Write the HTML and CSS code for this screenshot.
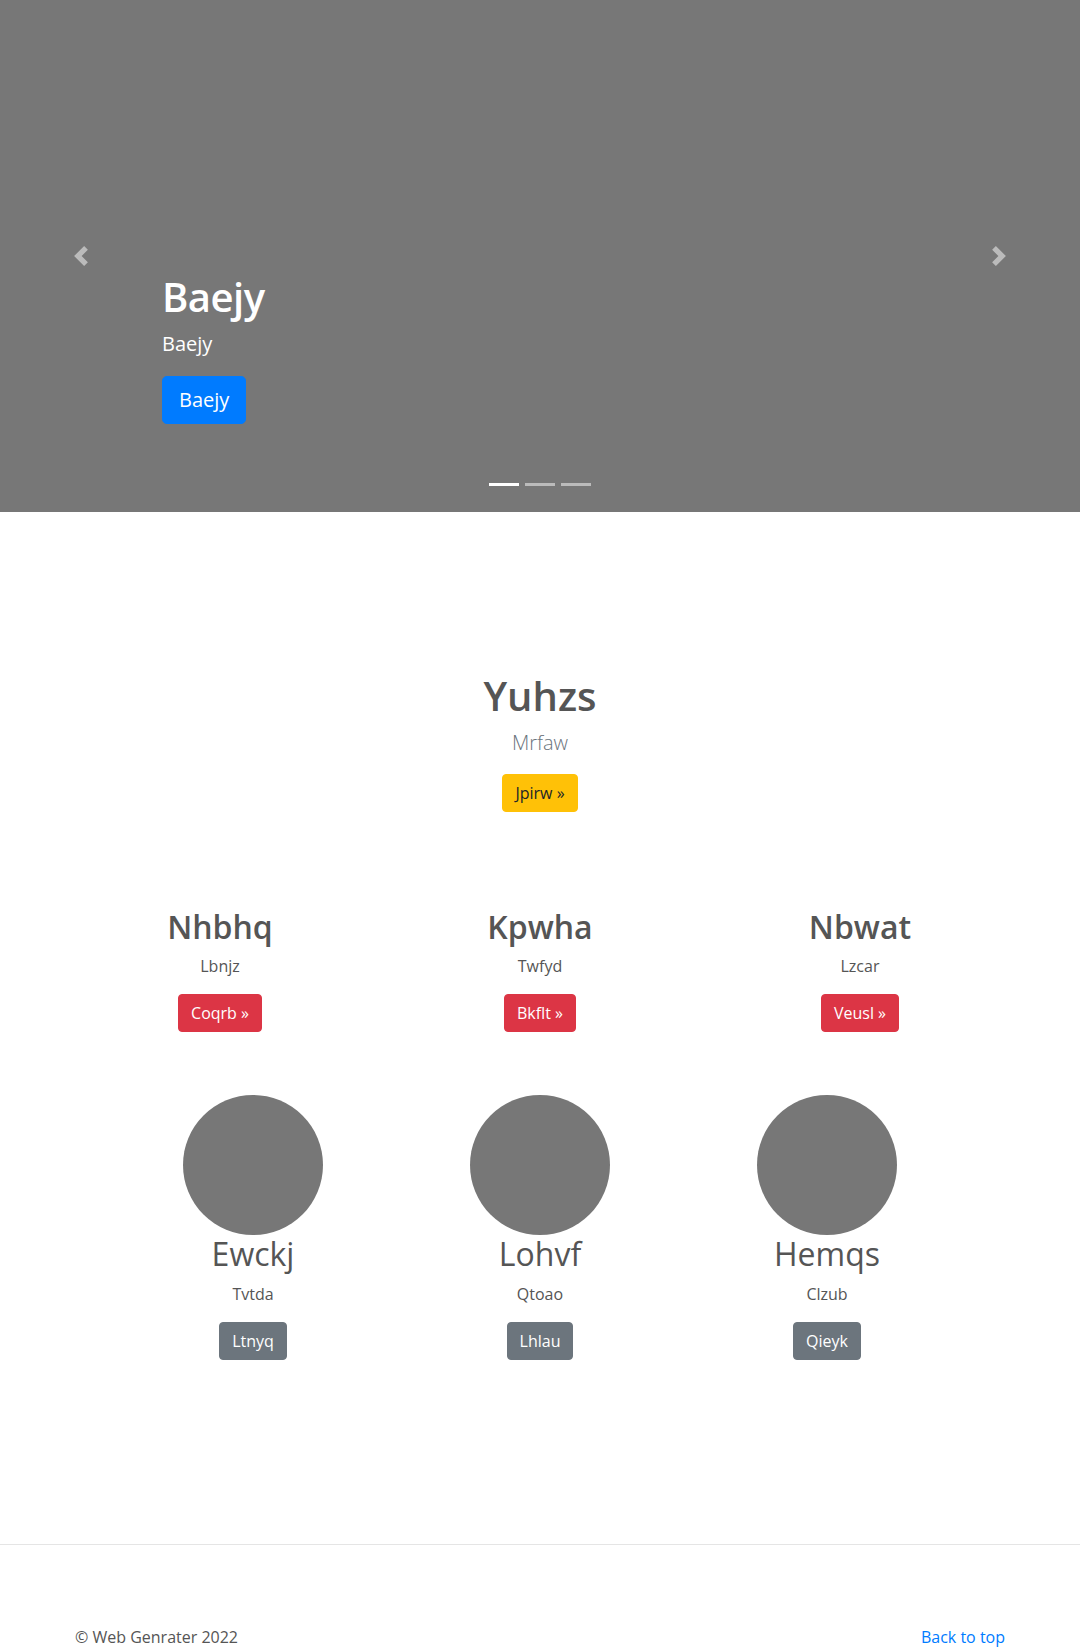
FILE: index.html
```html
<!DOCTYPE html>
<html lang="en">
<head>
<meta charset="utf-8">
<title>Carousel</title>
<link rel="stylesheet" href="styles.css">
</head>
<body>
<div class="carousel">
  <ol class="indicators">
    <li class="active"></li>
    <li></li>
    <li></li>
  </ol>
  <div class="slide">
    <div class="caption">
      <h1>Baejy</h1>
      <p>Baejy</p>
      <p><a class="btn btn-lg btn-primary" href="#">Baejy</a></p>
    </div>
  </div>
  <a class="control prev" href="#">
    <svg width="20" height="20" viewBox="0 0 8 8" fill="#fff"><path d="M5.25 0l-4 4 4 4 1.5-1.5L4.25 4l2.5-2.5L5.25 0z"/></svg>
  </a>
  <a class="control next" href="#">
    <svg width="20" height="20" viewBox="0 0 8 8" fill="#fff"><path d="M2.75 0l-1.5 1.5L3.75 4l-2.5 2.5L2.75 8l4-4-4-4z"/></svg>
  </a>
</div>

<main class="marketing">
  <section class="hero">
    <h1>Yuhzs</h1>
    <p class="lead">Mrfaw</p>
    <p><a class="btn btn-warning" href="#">Jpirw &raquo;</a></p>
  </section>

  <div class="row three">
    <div class="col">
      <h2 class="strong">Nhbhq</h2>
      <p>Lbnjz</p>
      <p><a class="btn btn-danger" href="#">Coqrb &raquo;</a></p>
    </div>
    <div class="col">
      <h2 class="strong">Kpwha</h2>
      <p>Twfyd</p>
      <p><a class="btn btn-danger" href="#">Bkflt &raquo;</a></p>
    </div>
    <div class="col">
      <h2 class="strong">Nbwat</h2>
      <p>Lzcar</p>
      <p><a class="btn btn-danger" href="#">Veusl &raquo;</a></p>
    </div>
  </div>

  <div class="row circles">
    <div class="col">
      <div class="circle"></div>
      <h2>Ewckj</h2>
      <p>Tvtda</p>
      <p><a class="btn btn-secondary" href="#">Ltnyq</a></p>
    </div>
    <div class="col">
      <div class="circle"></div>
      <h2>Lohvf</h2>
      <p>Qtoao</p>
      <p><a class="btn btn-secondary" href="#">Lhlau</a></p>
    </div>
    <div class="col">
      <div class="circle"></div>
      <h2>Hemqs</h2>
      <p>Clzub</p>
      <p><a class="btn btn-secondary" href="#">Qieyk</a></p>
    </div>
  </div>

  <hr class="divider">
</main>

<footer class="footer">
  <p class="to-top"><a href="#">Back to top</a></p>
  <p>&copy; Web Genrater 2022</p>
</footer>
</body>
</html>
```

FILE: styles.css
```css
* { box-sizing: border-box; }

body {
  margin: 0;
  font-family: "Open Sans", "Noto Sans", sans-serif;
  font-size: 16px;
  line-height: 1.5;
  color: #555;
  background: #fff;
}

h1, h2, p { margin-top: 0; }
h1, h2 { margin-bottom: 8px; line-height: 1.2; }
h1 { font-size: 40px; font-weight: 600; }
h2 { font-size: 32px; font-weight: 400; }
h2.strong { font-weight: 600; }
p { margin-bottom: 16px; }
a { color: #007bff; text-decoration: none; }

/* Buttons */
.btn {
  display: inline-block;
  padding: 6px 12px;
  font-size: 16px;
  line-height: 1.5;
  font-weight: 400;
  border: 1px solid transparent;
  border-radius: 4px;
  text-align: center;
  vertical-align: middle;
}
.btn-lg { padding: 8px 16px; font-size: 20px; border-radius: 4.8px; }
.btn-primary { background: #007bff; border-color: #007bff; color: #fff; }
.btn-warning { background: #ffc107; border-color: #ffc107; color: #212529; }
.btn-danger { background: #dc3545; border-color: #dc3545; color: #fff; }
.btn-secondary { background: #6c757d; border-color: #6c757d; color: #fff; }

/* Carousel */
.carousel {
  position: relative;
  height: 512px;
  background: #777;
  margin-bottom: 64px;
}
.slide { height: 100%; }
.caption {
  position: absolute;
  left: 15%;
  right: 15%;
  bottom: 52px;
  padding: 20px 0;
  color: #fff;
  text-align: left;
  z-index: 10;
}
.caption h1 { color: #fff; letter-spacing: -0.5px; }
.caption p:first-of-type { font-size: 20px; margin-bottom: 17px; }
.control {
  position: absolute;
  top: 0;
  bottom: 0;
  width: 15%;
  display: flex;
  align-items: center;
  justify-content: center;
  opacity: .5;
}
.control.prev { left: 0; }
.control.next { right: 0; }
.indicators {
  position: absolute;
  left: 0;
  right: 0;
  bottom: 0;
  display: flex;
  justify-content: center;
  list-style: none;
  padding: 0;
  margin: 0 15% 16px;
  z-index: 15;
}
.indicators li {
  width: 30px;
  height: 23px;
  margin: 0 3px;
  border-top: 10px solid transparent;
  border-bottom: 10px solid transparent;
  background: #fff;
  background-clip: padding-box;
  opacity: .5;
}
.indicators li.active { opacity: 1; }

/* Marketing */
.hero {
  text-align: center;
  padding: 96px 0 80px;
}
.lead { font-size: 20px; font-weight: 300; color: #6c757d; }

.row {
  display: grid;
  grid-template-columns: repeat(3, 1fr);
  margin: 0 auto;
  text-align: center;
}
.three { width: 960px; margin-bottom: 47px; }
.circles { width: 861px; }
.col { padding: 0 15px; }
.circle {
  width: 140px;
  height: 140px;
  border-radius: 50%;
  background: #777;
  margin: 0 auto;
}

.divider {
  margin: 168px 0 80px;
  border: 0;
  border-top: 1px solid rgba(0, 0, 0, .1);
  height: 0;
}

/* Footer */
.footer {
  width: 960px;
  margin: 0 auto;
  padding: 0 15px;
}
.to-top { float: right; }
```
